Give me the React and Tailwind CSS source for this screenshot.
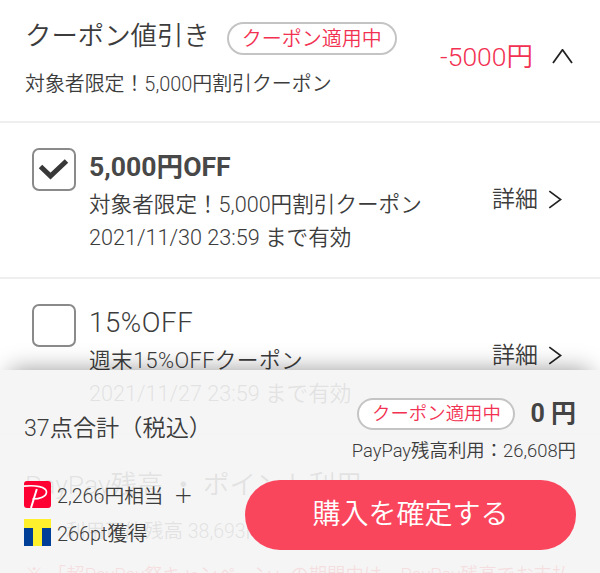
import React, { useState } from 'react';

const coupons = [
  { id: 1, title: '5,000円OFF', desc: '対象者限定！5,000円割引クーポン', limit: '2021/11/30 23:59 まで有効' },
  { id: 2, title: '15%OFF', desc: '週末15%OFFクーポン', limit: '2021/11/27 23:59 まで有効' },
];

const Chevron = ({ className }) => (
  <svg className={className} viewBox="0 0 14 20" fill="none" stroke="#222" strokeWidth="1.8">
    <path d="M1 1.2 L13 10 L1 18.8" />
  </svg>
);

const CouponRow = ({ coupon, checked, onToggle }) => (
  <div className="flex h-[156px] border-b-2 border-[#eeeeee] pl-8">
    <button
      onClick={onToggle}
      className="mt-[25px] flex h-[43px] w-[44px] shrink-0 items-center justify-center rounded-[7px] border-2 border-[#8a8a8a] bg-white"
    >
      {checked && (
        <svg width="32" height="24" viewBox="0 0 32 24" fill="none" stroke="#383838" strokeWidth="5">
          <path d="M2.5 8.5 L12.5 18 L28.5 3" />
        </svg>
      )}
    </button>
    <div className="ml-[13px] flex-1 pt-[26px]">
      <div className={checked ? 'h-[36px] text-[26.6px] leading-[36px] font-bold text-[#484848]' : 'h-[36px] text-[27.6px] leading-[36px] tracking-[0.6px]'}>{coupon.title}</div>
      <div className={checked ? 'mt-[3px] h-[33px] text-[21.6px] leading-[33px]' : 'mt-[3px] h-[33px] text-[21.7px] leading-[33px] tracking-[0.4px]'}>{coupon.desc}</div>
      <div className="h-[33px] text-[21.6px] leading-[33px]">{coupon.limit}</div>
    </div>
    <div className="mt-[60px] mr-[38px] flex h-[34px] items-center text-[23px] leading-[34px]">
      詳細
      <Chevron className="mb-[2px] ml-[10px] h-[19px] w-[14px]" />
    </div>
  </div>
);

const App = () => {
  const [selected, setSelected] = useState(1);

  return (
    <div className="relative h-[573px] w-[600px] overflow-hidden bg-white font-['Roboto','Noto_Sans_CJK_JP',sans-serif] font-[350] whitespace-nowrap text-[#3c3c3c]">
      <div className="flex h-[123px] items-start border-b-2 border-[#eeeeee] pl-[25px]">
        <div className="flex-1">
          <div className="flex items-start pt-[16px]">
            <h1 className="h-[40px] text-[26.4px] leading-[40px] font-[350]">クーポン値引き</h1>
            <span className="mt-[6px] ml-[17px] flex h-[33px] w-[170px] items-center justify-center rounded-full border-2 border-[#c4c4c4] text-[20px] text-[#f23152]">クーポン適用中</span>
          </div>
          <p className="mt-[14px] h-[30px] text-[19.9px] leading-[30px]">対象者限定！5,000円割引クーポン</p>
        </div>
        <div className="mt-[38px] mr-[27px] flex h-[38px] items-center text-[26.5px] leading-[38px] text-[#f23152]">
          -5000円
          <svg className="ml-[19px]" width="21" height="16" viewBox="0 0 21 16" fill="none" stroke="#222" strokeWidth="1.8">
            <path d="M1 14 L10.5 0.8 L20 14" />
          </svg>
        </div>
      </div>

      {coupons.map((c) => (
        <CouponRow key={c.id} coupon={c} checked={selected === c.id} onToggle={() => setSelected(c.id)} />
      ))}

      <div className="pt-[30px] pl-[25px]">
        <h2 className="h-[40px] text-[26.5px] leading-[40px] font-[350]">PayPay残高 ・ ポイント利用</h2>
        <p className="mt-[12px] ml-[41px] h-[30px] text-[19.5px] leading-[30px]">利用可能残高 38,693円</p>
        <p className="mt-[13px] h-[30px] text-[18.4px] leading-[30px] text-[#ff1530]">※ 「超PayPay祭キャンペーン」の期間中は、PayPay残高でお支払</p>
      </div>

      <div className="absolute inset-x-0 bottom-0 h-[203px] bg-[#f4f4f4]/90 shadow-[0_-10px_22px_-10px_rgba(0,0,0,0.4)]">
        <div className="flex justify-between pr-[24px] pl-[24px]">
          <div className="mt-[40px] h-[36px] text-[23.2px] leading-[36px]">37点合計（税込）</div>
          <div>
            <div className="mt-[28px] flex h-[32px] items-center justify-end">
              <span className="flex h-[32px] w-[158px] items-center justify-center rounded-full border-2 border-[#c4c4c4] bg-white text-[18.4px] text-[#f23152]">クーポン適用中</span>
              <span className="ml-[15px] text-[25px] font-bold text-[#444]">0 円</span>
            </div>
            <div className="mt-[7px] h-[28px] text-right text-[18.4px] leading-[28px]">PayPay残高利用：26,608円</div>
          </div>
        </div>
        <div className="mt-[15px] flex justify-between pr-[24px] pl-[24px]">
          <div className="leading-[28px]">
            <div className="flex h-[28px] items-center text-[19.7px]">
              <svg className="mr-[6px]" width="27" height="27" viewBox="0 0 27 27" fill="none">
                <rect width="27" height="27" rx="3" fill="#ff0033" />
                <path d="M0 5.2 C11 3.8 22.5 5.8 22.5 11 C22.5 15.5 16 18 8.5 18" stroke="#fff" strokeWidth="1.7" />
                <path d="M12.8 8 L7 27" stroke="#fff" strokeWidth="2" />
              </svg>
              <span className="mt-[6px]">2,266円相当</span>
              <span className="mt-[6px] ml-[10px]">＋</span>
            </div>
            <div className="mt-[10px] flex h-[28px] items-center text-[19.9px]">
              <svg className="mr-[6px]" width="27" height="27" viewBox="0 0 27 27">
                <rect width="27" height="27" fill="#fff02d" />
                <path d="M0 9h9v18H0zM18 9h9v18h-9z" fill="#003f98" />
              </svg>
              <span className="mt-[6px]">266pt獲得</span>
            </div>
          </div>
          <button className="h-[70px] w-[331px] rounded-full bg-[#fa465d] text-[28px] font-[350] text-white">購入を確定する</button>
        </div>
      </div>
    </div>
  );
};
export default App;
